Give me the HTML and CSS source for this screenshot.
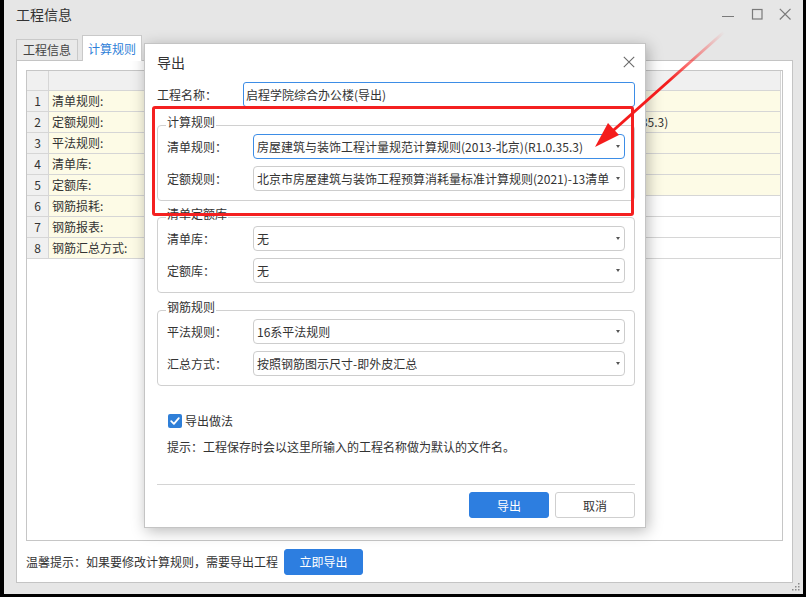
FILE: index.html
```html
<!DOCTYPE html>
<html lang="zh-CN">
<head>
<meta charset="utf-8">
<title>工程信息</title>
<link rel="stylesheet" href="styles.css">
</head>
<body>
<div class="window">
  <div class="titlebar">
    <span class="title">工程信息</span>
    <div class="winctrls">
      <svg class="wc wc-min" width="12" height="12" viewBox="0 0 12 12"><line x1="0" y1="8.5" x2="12" y2="8.5" stroke="#7a7a7a" stroke-width="1"/></svg>
      <svg class="wc wc-max" width="12" height="12" viewBox="0 0 12 12"><rect x="1.5" y="1.5" width="9.5" height="9.5" fill="none" stroke="#7a7a7a" stroke-width="1.2"/></svg>
      <svg class="wc wc-close" width="12" height="12" viewBox="0 0 12 12"><path d="M0.8 0.8 L11.5 11.5 M11.5 0.8 L0.8 11.5" stroke="#7a7a7a" stroke-width="1.2"/></svg>
    </div>
  </div>
  <div class="tabs">
    <div class="tab">工程信息</div>
    <div class="tab active">计算规则</div>
  </div>
  <div class="panel">
    <div class="grid">
      <div class="row head"><div class="c num"></div><div class="c name"></div><div class="c val"></div></div>
      <div class="row"><div class="c num">1</div><div class="c name">清单规则:</div><div class="c val hl">房屋建筑与装饰工程计量规范计算规则(2013-北京)(R1.0.35.3)</div></div>
      <div class="row"><div class="c num">2</div><div class="c name">定额规则:</div><div class="c val hl">北京市房屋建筑与装饰工程预算消耗量标准计算规则(2021)-13清单计价模式的计算规则(R1.0.35.3)</div></div>
      <div class="row"><div class="c num">3</div><div class="c name">平法规则:</div><div class="c val hl">16系平法规则</div></div>
      <div class="row"><div class="c num">4</div><div class="c name">清单库:</div><div class="c val hl">无</div></div>
      <div class="row"><div class="c num">5</div><div class="c name">定额库:</div><div class="c val hl">无</div></div>
      <div class="row"><div class="c num">6</div><div class="c name">钢筋损耗:</div><div class="c val">不计算损耗</div></div>
      <div class="row"><div class="c num">7</div><div class="c name">钢筋报表:</div><div class="c val">北京(2021)</div></div>
      <div class="row"><div class="c num">8</div><div class="c name">钢筋汇总方式:</div><div class="c val">按照钢筋图示尺寸-即外皮汇总</div></div>
    </div>
    <div class="footer">
      <span class="footer-hint">温馨提示：如果要修改计算规则，需要导出工程</span>
      <button class="btn primary">立即导出</button>
    </div>
  </div>
  <svg class="grip" width="8" height="8" viewBox="0 0 8 8">
    <rect x="6" y="0" width="1.5" height="1.5" fill="#8a8a8a"/>
    <rect x="3" y="3" width="1.5" height="1.5" fill="#8a8a8a"/>
    <rect x="6" y="3" width="1.5" height="1.5" fill="#8a8a8a"/>
    <rect x="0" y="6" width="1.5" height="1.5" fill="#8a8a8a"/>
    <rect x="3" y="6" width="1.5" height="1.5" fill="#8a8a8a"/>
    <rect x="6" y="6" width="1.5" height="1.5" fill="#8a8a8a"/>
  </svg>
</div>

<div class="dialog">
  <div class="dlg-head">
    <span class="dlg-title">导出</span>
    <svg class="dlg-close" width="12" height="12" viewBox="0 0 12 12"><path d="M0.8 0.8 L11.2 11.2 M11.2 0.8 L0.8 11.2" stroke="#6a6a6a" stroke-width="1.1"/></svg>
  </div>
  <div class="field top">
    <label class="lbl">工程名称：</label>
    <div class="input">启程学院综合办公楼(导出)</div>
  </div>

  <div class="group">
    <div class="group-title">计算规则</div>
    <div class="field"><label class="lbl">清单规则：</label><div class="select hover"><span class="sel-text">房屋建筑与装饰工程计量规范计算规则(2013-北京)(R1.0.35.3)</span><i class="caret"></i></div></div>
    <div class="field"><label class="lbl">定额规则：</label><div class="select"><span class="sel-text">北京市房屋建筑与装饰工程预算消耗量标准计算规则(2021)-13清单</span><i class="caret"></i></div></div>
  </div>

  <div class="group">
    <div class="group-title">清单定额库</div>
    <div class="field"><label class="lbl">清单库：</label><div class="select"><span class="sel-text">无</span><i class="caret"></i></div></div>
    <div class="field"><label class="lbl">定额库：</label><div class="select"><span class="sel-text">无</span><i class="caret"></i></div></div>
  </div>

  <div class="group g3">
    <div class="group-title">钢筋规则</div>
    <div class="field"><label class="lbl">平法规则：</label><div class="select"><span class="sel-text">16系平法规则</span><i class="caret"></i></div></div>
    <div class="field"><label class="lbl">汇总方式：</label><div class="select"><span class="sel-text">按照钢筋图示尺寸-即外皮汇总</span><i class="caret"></i></div></div>
  </div>

  <div class="check">
    <span class="box"><svg width="14" height="14" viewBox="0 0 14 14"><path d="M3.2 7.2 L5.9 9.8 L10.8 4.2" fill="none" stroke="#fff" stroke-width="1.8" stroke-linecap="round" stroke-linejoin="round"/></svg></span>
    <span class="check-text">导出做法</span>
  </div>
  <div class="hint">提示：工程保存时会以这里所输入的工程名称做为默认的文件名。</div>
  <div class="dlg-foot">
    <button class="btn primary wide">导出</button>
    <button class="btn wide">取消</button>
  </div>
</div>

<div class="highlight"></div>

<svg class="arrow" width="806" height="597" viewBox="0 0 806 597">
  <defs>
    <linearGradient id="ag" gradientUnits="userSpaceOnUse" x1="724" y1="32" x2="612" y2="132">
      <stop offset="0" stop-color="#ff3030" stop-opacity="0"/>
      <stop offset="0.5" stop-color="#f41c1c" stop-opacity="1"/>
      <stop offset="1" stop-color="#f41c1c" stop-opacity="1"/>
    </linearGradient>
  </defs>
  <line x1="724" y1="32" x2="607" y2="136" stroke="url(#ag)" stroke-width="3"/>
  <polygon points="595,147 608,123 619,135" fill="#f41c1c"/>
</svg>
</body>
</html>
```

FILE: styles.css
```css
* { box-sizing: border-box; }
html, body { margin: 0; padding: 0; }
body {
  width: 806px;
  height: 597px;
  background: #000;
  overflow: hidden;
  position: relative;
  font-family: "Noto Sans CJK SC", "Noto Sans", sans-serif;
  font-size: 12px;
  color: #333;
}

/* main window */
.window {
  position: relative;
  margin-left: 4px;
  width: 799px;
  height: 594px;
  background: #e6e6e6;
  display: flex;
  flex-direction: column;
}
.titlebar {
  height: 28px;
  flex: none;
  display: flex;
  align-items: center;
  justify-content: space-between;
  padding-left: 12px;
  padding-right: 12px;
}
.title { font-size: 14px; line-height: 20px; color: #333; }
.winctrls { display: flex; align-items: center; }
.wc { display: block; }
.wc-max { margin-left: 17px; }
.wc-close { margin-left: 16px; }

.tabs {
  height: 32px;
  flex: none;
  display: flex;
  align-items: flex-end;
  padding-left: 12px;
  gap: 4px;
}
.tab {
  height: 21px;
  line-height: 20px;
  padding: 0 6px;
  border: 1px solid #c9c9c9;
  border-bottom: none;
  background: #e9e9e9;
  color: #444;
}
.tab.active {
  height: 26px;
  line-height: 25px;
  padding: 0 5px;
  margin-bottom: -1px;
  background: #fff;
  color: #2f7fd8;
  position: relative;
  z-index: 1;
}

.panel {
  flex: 1;
  margin: 0 10px 11px 12px;
  border: 1px solid #c4c4c4;
  background: #fff;
  padding: 9px 9px 0 9px;
  display: flex;
  flex-direction: column;
}
.grid {
  height: 471px;
  flex: none;
  border: 1px solid #c6c6c6;
  background: #fff;
}
.row {
  display: flex;
  width: 754px;
  height: 21px;
  border-bottom: 1px solid #d6d6d6;
}
.row.head { height: 20px; background: #f0f0f0; }
.c {
  line-height: 20px;
  border-right: 1px solid #d6d6d6;
  white-space: nowrap;
  overflow: hidden;
}
.c.num { width: 22px; flex: none; text-align: center; background: #f0f0f0; color: #333; }
.c.name { width: 97px; flex: none; padding-left: 3px; background: #fdfbe6; }
.c.val { flex: 1; padding-left: 3px; }
.c.val.hl { background: #fdfbe6; }
.row.head .c { line-height: 19px; background: #f0f0f0; }

.footer {
  flex: 1;
  display: flex;
  align-items: center;
  gap: 6px;
}
.footer-hint { line-height: 18px; color: #333; }

.btn {
  font-family: inherit;
  font-size: 12px;
  height: 26px;
  border-radius: 3px;
  border: 1px solid #cfcfcf;
  background: #fff;
  color: #333;
  padding: 0;
  margin: 0;
}
.btn.primary {
  background: #2d7ee0;
  border-color: #2d7ee0;
  color: #fff;
  width: 79px;
}
.btn.wide { width: 80px; }

.grip { position: absolute; right: 3px; bottom: 3px; }

/* dialog */
.dialog {
  position: absolute;
  left: 144px;
  top: 43px;
  width: 502px;
  height: 485px;
  background: #fff;
  border: 1px solid #c4c4c4;
  box-shadow: 2px 3px 14px rgba(0, 0, 0, 0.28);
  padding: 0 10px 0 12px;
  display: flex;
  flex-direction: column;
}
.dlg-head {
  height: 38px;
  flex: none;
  display: flex;
  justify-content: space-between;
  align-items: flex-start;
}
.dlg-title { font-size: 14px; line-height: 20px; margin-top: 8px; color: #333; }
.dlg-close { margin-top: 12px; display: block; }

.field {
  display: flex;
  align-items: center;
  height: 25px;
  flex: none;
}
.field + .field { margin-top: 7px; }
.lbl { width: 86px; flex: none; line-height: 18px; color: #333; }
.input {
  flex: 1;
  height: 25px;
  border: 1px solid #3d8de6;
  border-radius: 3px;
  padding-left: 2px;
  line-height: 23px;
  white-space: nowrap;
  overflow: hidden;
}

.group {
  margin-top: 18px;
  border: 1px solid #d0d0d0;
  border-radius: 4px;
  padding: 0 9px 9px 9px;
  flex: none;
}
.group + .group { margin-top: 16px; }
.group.g3 { margin-top: 17px; }
.group-title {
  width: fit-content;
  margin: -12px 0 0 -1px;
  padding: 0 1px;
  height: 16px;
  line-height: 16px;
  background: #fff;
  color: #333;
}
.group-title + .field { margin-top: 4px; }

.select {
  flex: 1;
  min-width: 0;
  height: 25px;
  border: 1px solid #cdcdcd;
  border-radius: 4px;
  display: flex;
  align-items: center;
  padding: 0 0 0 3px;
}
.select.hover { border-color: #3d8de6; }
.sel-text {
  flex: 1;
  min-width: 0;
  white-space: nowrap;
  overflow: hidden;
  line-height: 23px;
}
.caret {
  flex: none;
  width: 0;
  height: 0;
  border-left: 2.5px solid transparent;
  border-right: 2.5px solid transparent;
  border-top: 3px solid #555;
  margin: 0 4px 0 3px;
}

.check {
  margin-top: 27px;
  height: 16px;
  display: flex;
  align-items: center;
  padding-left: 11px;
  flex: none;
}
.box {
  width: 14px;
  height: 14px;
  border-radius: 2px;
  background: #2f7fd8;
  display: block;
}
.box svg { display: block; }
.check-text { margin-left: 3px; line-height: 16px; }

.hint {
  margin-top: 9px;
  line-height: 18px;
  padding-left: 10px;
  flex: none;
}
.dlg-foot {
  margin-top: 28px;
  border-top: 1px solid #d4d4d4;
  padding-top: 7px;
  display: flex;
  justify-content: flex-end;
  gap: 6px;
  flex: none;
}

/* annotations */
.highlight {
  position: absolute;
  left: 152px;
  top: 106px;
  width: 482px;
  height: 110px;
  border: 3px solid #f42020;
  border-radius: 3px;
  pointer-events: none;
}
.arrow {
  position: absolute;
  left: 0;
  top: 0;
  pointer-events: none;
}
```
